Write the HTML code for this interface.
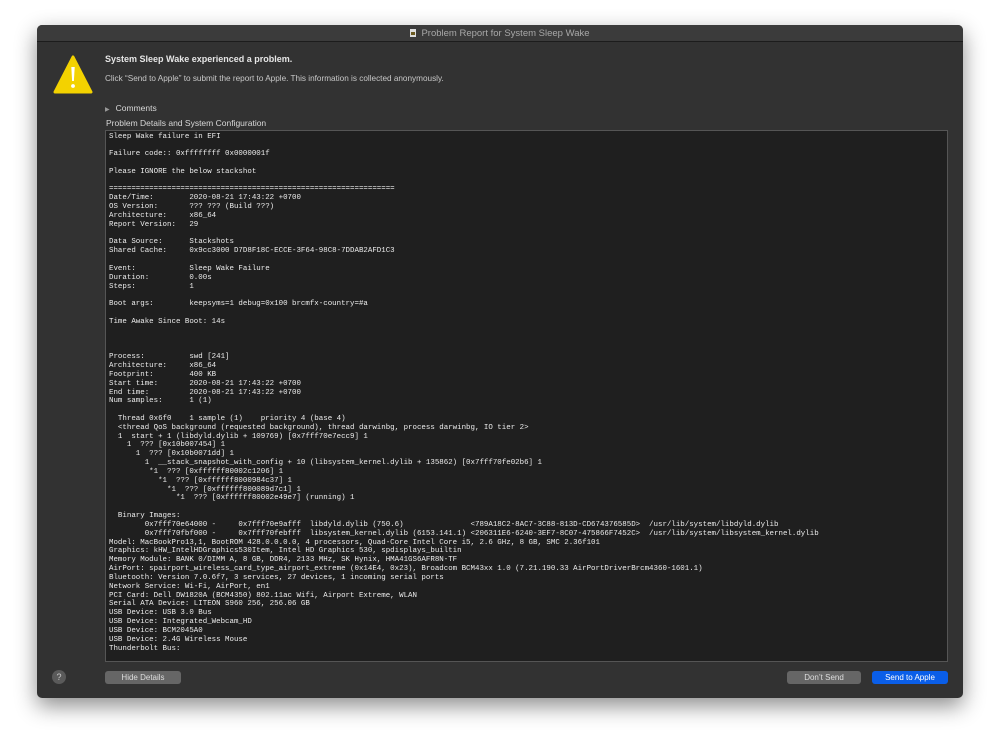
<!DOCTYPE html>
<html><head><meta charset="utf-8"><style>
*{margin:0;padding:0;box-sizing:border-box}
html,body{width:1000px;height:749px;background:#fff;overflow:hidden;font-family:"Liberation Sans",sans-serif}
.win{position:absolute;left:37px;top:25px;width:926px;height:673px;background:#323232;border-radius:5px;box-shadow:0 8px 22px rgba(0,0,0,.45);overflow:hidden}
.tb{position:absolute;left:0;top:0;width:926px;height:17px;background:#3b3b3b;border-bottom:1px solid #1c1c1c;color:#a8a8a8;font-size:9.5px;line-height:17px;text-align:center}
.doc{display:inline-block;width:6px;height:8px;background:#ddd;vertical-align:-1px;margin-right:5px;position:relative}
.doc:after{content:"";position:absolute;left:1px;top:3px;width:4px;height:3px;background:#6b5a20}
.abs{position:absolute}
.h1{left:68px;top:29px;color:#e6e6e6;font-size:9px;font-weight:bold}
.h2{left:68px;top:49px;color:#c8c8c8;font-size:8.2px}
.cm{left:68px;top:78px;color:#d8d8d8;font-size:8.5px}
.cm span{font-size:6px;color:#999;margin-right:6px}
.pd{left:69px;top:93px;color:#d8d8d8;font-size:8.5px}
.ta{position:absolute;left:68px;top:105px;width:843px;height:532px;background:#1f1f1f;border:1px solid #555}
pre{font-family:"Liberation Mono",monospace;font-size:7.45px;line-height:8.83px;color:#ececec;padding:1.5px 0 0 3px;white-space:pre}
.btn{position:absolute;top:646px;height:13px;border-radius:3px;font-size:8px;line-height:13px;text-align:center;color:#ddd;background:#666}
.q{position:absolute;left:15px;top:645px;width:14px;height:14px;border-radius:50%;background:#5a5a5a;color:#ccc;font-size:9px;line-height:14px;text-align:center}
</style></head><body>
<div class="win">
<div class="tb"><span class="doc"></span>Problem Report for System Sleep Wake</div>
<svg class="abs" style="left:16px;top:30px" width="40" height="40" viewBox="0 0 40 40"><path d="M20 2 L38 37 L2 37 Z" fill="#f3d200" stroke="#f3d200" stroke-width="3" stroke-linejoin="round"/><path d="M18.3 12 h3.4 l-0.8 14 h-1.8 Z" fill="#fff"/><circle cx="20" cy="31" r="1.9" fill="#fff"/></svg>
<div class="abs h1">System Sleep Wake experienced a problem.</div>
<div class="abs h2">Click “Send to Apple” to submit the report to Apple. This information is collected anonymously.</div>
<div class="abs cm"><span>▶</span>Comments</div>
<div class="abs pd">Problem Details and System Configuration</div>
<div class="ta"><pre>Sleep Wake failure in EFI

Failure code:: 0xffffffff 0x0000001f

Please IGNORE the below stackshot

================================================================
Date/Time:        2020-08-21 17:43:22 +0700
OS Version:       ??? ??? (Build ???)
Architecture:     x86_64
Report Version:   29

Data Source:      Stackshots
Shared Cache:     0x9cc3000 D7D8F18C-ECCE-3F64-98C8-7DDAB2AFD1C3

Event:            Sleep Wake Failure
Duration:         0.00s
Steps:            1

Boot args:        keepsyms=1 debug=0x100 brcmfx-country=#a

Time Awake Since Boot: 14s



Process:          swd [241]
Architecture:     x86_64
Footprint:        400 KB
Start time:       2020-08-21 17:43:22 +0700
End time:         2020-08-21 17:43:22 +0700
Num samples:      1 (1)

  Thread 0x6f0    1 sample (1)    priority 4 (base 4)
  &lt;thread QoS background (requested background), thread darwinbg, process darwinbg, IO tier 2&gt;
  1  start + 1 (libdyld.dylib + 109769) [0x7fff70e7ecc9] 1
    1  ??? [0x10b007454] 1
      1  ??? [0x10b0071dd] 1
        1  __stack_snapshot_with_config + 10 (libsystem_kernel.dylib + 135862) [0x7fff70fe02b6] 1
         *1  ??? [0xffffff80002c1206] 1
           *1  ??? [0xffffff8000984c37] 1
             *1  ??? [0xffffff800089d7c1] 1
               *1  ??? [0xffffff80002e49e7] (running) 1

  Binary Images:
        0x7fff70e64000 -     0x7fff70e9afff  libdyld.dylib (750.6)               &lt;789A18C2-8AC7-3C88-813D-CD674376585D&gt;  /usr/lib/system/libdyld.dylib
        0x7fff70fbf000 -     0x7fff70febfff  libsystem_kernel.dylib (6153.141.1) &lt;206311E6-6240-3EF7-8C07-475866F7452C&gt;  /usr/lib/system/libsystem_kernel.dylib
Model: MacBookPro13,1, BootROM 428.0.0.0.0, 4 processors, Quad-Core Intel Core i5, 2.6 GHz, 8 GB, SMC 2.36f101
Graphics: kHW_IntelHDGraphics530Item, Intel HD Graphics 530, spdisplays_builtin
Memory Module: BANK 0/DIMM A, 8 GB, DDR4, 2133 MHz, SK Hynix, HMA41GS6AFR8N-TF
AirPort: spairport_wireless_card_type_airport_extreme (0x14E4, 0x23), Broadcom BCM43xx 1.0 (7.21.190.33 AirPortDriverBrcm4360-1601.1)
Bluetooth: Version 7.0.6f7, 3 services, 27 devices, 1 incoming serial ports
Network Service: Wi-Fi, AirPort, en1
PCI Card: Dell DW1820A (BCM4350) 802.11ac Wifi, Airport Extreme, WLAN
Serial ATA Device: LITEON S960 256, 256.06 GB
USB Device: USB 3.0 Bus
USB Device: Integrated_Webcam_HD
USB Device: BCM2045A0
USB Device: 2.4G Wireless Mouse
Thunderbolt Bus:</pre></div>
<div class="q">?</div>
<div class="btn" style="left:68px;width:76px">Hide Details</div>
<div class="btn" style="left:750px;width:74px">Don’t Send</div>
<div class="btn" style="left:835px;width:76px;background:#0a5ee8;color:#fff">Send to Apple</div>
</div>
</body></html>
